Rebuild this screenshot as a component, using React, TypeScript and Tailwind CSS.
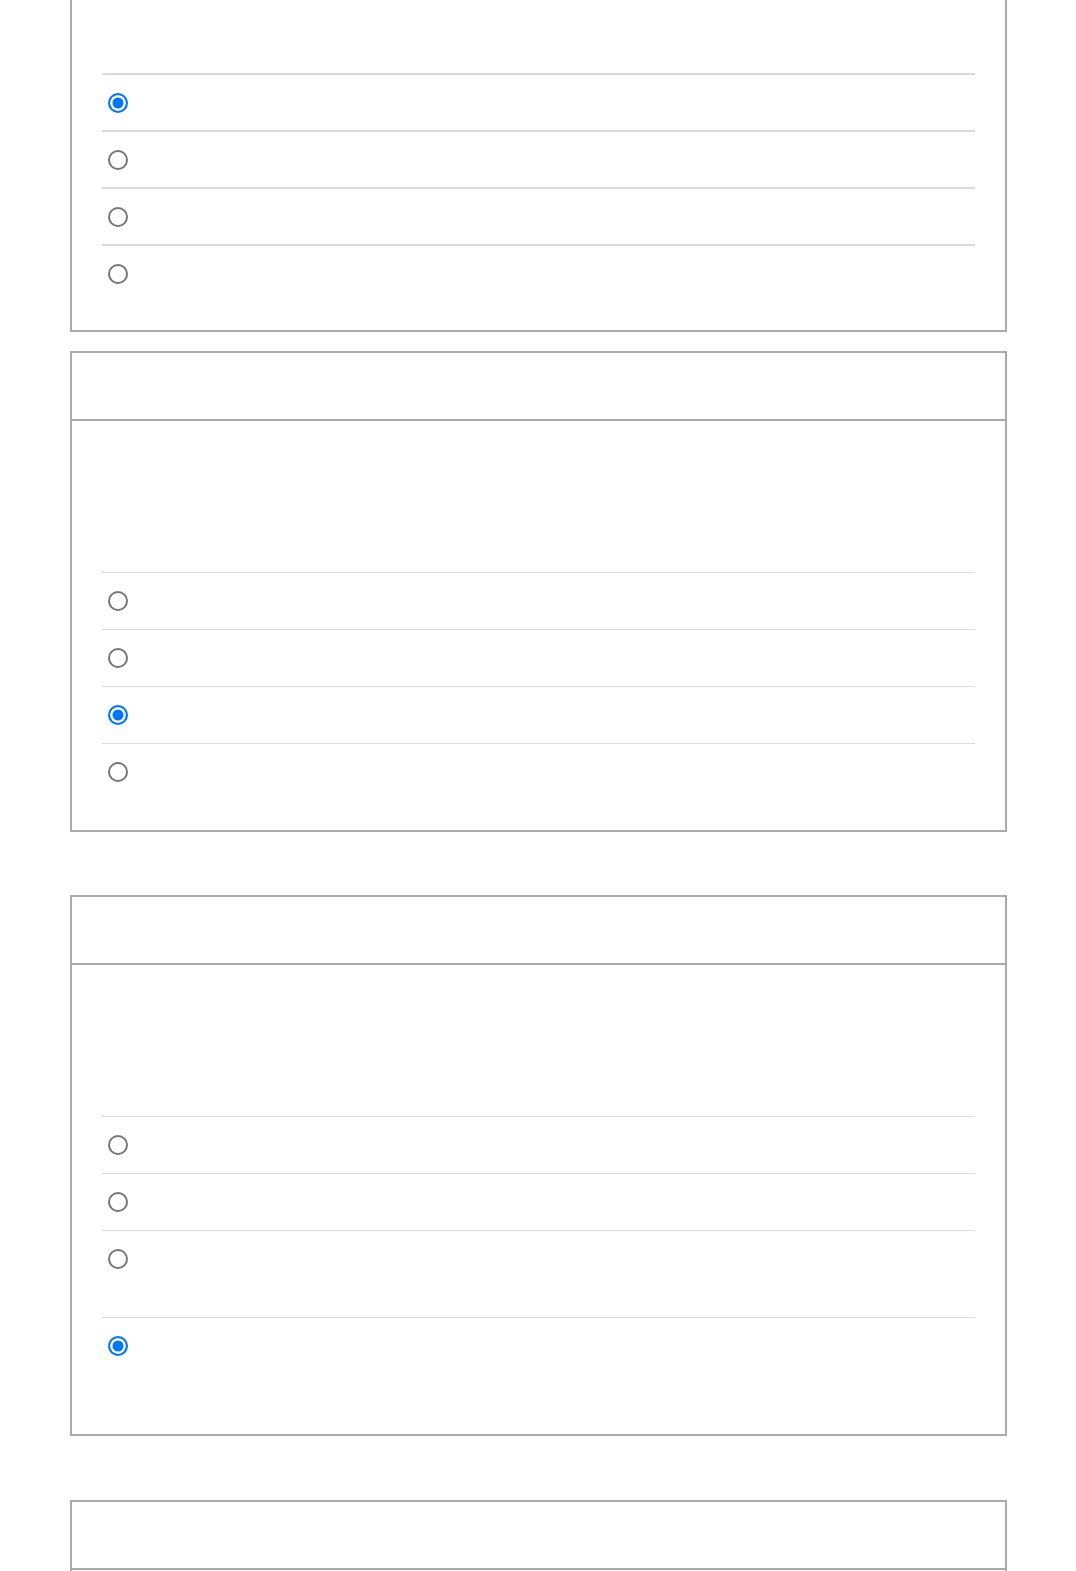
const Radio = ({ name, checked }: { name: string; checked?: boolean }) => {
  return (
    <input
      type="radio"
      name={name}
      defaultChecked={checked}
      className="ml-[6px] h-[20px] w-[20px] shrink-0 appearance-none rounded-full border-2 border-[#767676] bg-white checked:border-[#0075ff] checked:bg-[#0075ff] checked:shadow-[inset_0_0_0_2.5px_#ffffff]"
    />
  );
};

type Option = { checked?: boolean; tall?: boolean };

const Options = ({ name, options, thick }: { name: string; options: Option[]; thick?: boolean }) => {
  return (
    <ul>
      {options.map((o, i) => (
        <li
          key={i}
          className={
            thick
              ? 'flex items-start border-t-2 border-[#d9d9d9] pt-[18px] pb-[17px]'
              : o.tall
                ? 'flex items-start border-t border-[#dcdcdc] pt-[18px] pb-[48px]'
                : 'flex items-start border-t border-[#dcdcdc] pt-[18px] pb-[18px]'
          }
        >
          <Radio name={name} checked={o.checked} />
          <span className="ml-3 text-[16px] leading-[20px] text-white"></span>
        </li>
      ))}
    </ul>
  );
};

const Card = ({ name, options }: { name: string; options: Option[] }) => {
  return (
    <section className="border-2 border-[#aaaaaa] bg-white">
      <div className="h-[68px] border-b-2 border-[#aaaaaa]"></div>
      <div className="px-[30px] pb-[30px]">
        <div className="h-[151px]"></div>
        <Options name={name} options={options} />
      </div>
    </section>
  );
};

export default function App() {
  return (
    <div className="min-h-screen bg-white" style={{ fontFamily: 'Roboto, sans-serif' }}>
      <div className="mx-auto w-[937px]">
        {/* question cut off by the top of the page */}
        <section className="border-2 border-t-0 border-[#aaaaaa] bg-white">
          <div className="px-[30px] pb-[29px]">
            <div className="h-[73px]"></div>
            <Options name="q1" thick options={[{ checked: true }, {}, {}, {}]} />
          </div>
        </section>

        <div className="mt-[19px]">
          <Card name="q2" options={[{}, {}, { checked: true }, {}]} />
        </div>

        <div className="mt-[63px]">
          <Card name="q3" options={[{}, {}, { tall: true }, { checked: true, tall: true }]} />
        </div>

        <div className="mt-[64px]">
          <Card name="q4" options={[{}, {}, {}, {}]} />
        </div>
      </div>
    </div>
  );
}
